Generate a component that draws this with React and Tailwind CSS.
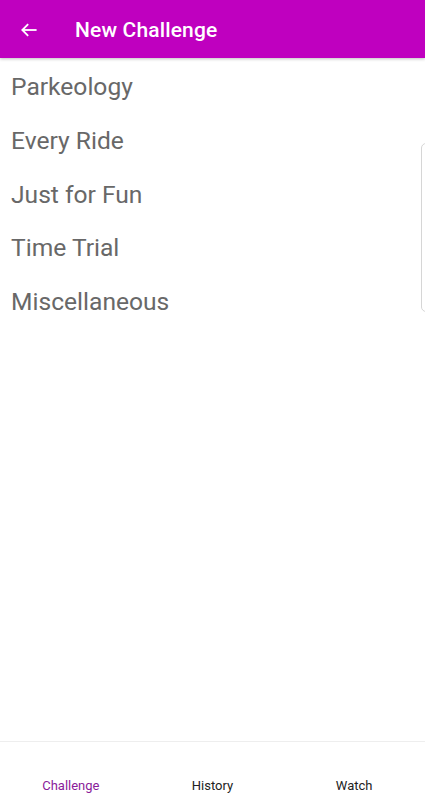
import React from "react";

export default function App() {
  const items = ["Parkeology", "Every Ride", "Just for Fun", "Time Trial", "Miscellaneous"];
  return (
    <div className="relative flex h-[800px] w-[425px] flex-col overflow-hidden bg-white" style={{ fontFamily: "Roboto, 'Noto Sans', sans-serif" }}>
      <div className="z-10 flex h-[58px] shrink-0 items-center bg-[#bf00bf] shadow-[0_1px_3px_rgba(0,0,0,0.25)]">
        <div className="flex w-[56px] items-center justify-center pl-[1px] pt-[1px]">
          <svg width="20" height="20" viewBox="0 0 24 24" fill="none" stroke="white" strokeWidth="2.2" strokeLinecap="square">
            <path d="M20 12H5" />
            <path d="M11 5l-7 7 7 7" strokeLinecap="butt" strokeLinejoin="miter" />
          </svg>
        </div>
        <div className="ml-[19px] pt-[3px] text-[21px] font-medium text-white tracking-[0.15px]">New Challenge</div>
      </div>
      <div className="flex flex-col pt-[3px]">
        {items.map((t) => (
          <div key={t} className="flex h-[53.6px] items-center pl-[11px] text-[24.6px] text-[#686868]">
            {t}
          </div>
        ))}
      </div>
      <div className="absolute right-[-6px] top-[143px] h-[169px] w-[10px] rounded-[6px] border border-[#d6d6d6]" />
      <div className="mt-auto flex h-[59px] border-t border-[#eeeeee] pt-[34px]">
        <div className="flex flex-1 justify-center text-[13px] text-[#8a1c9a]">Challenge</div>
        <div className="flex flex-1 justify-center text-[13px] text-[#222222]">History</div>
        <div className="flex flex-1 justify-center text-[13px] text-[#222222]">Watch</div>
      </div>
    </div>
  );
}
